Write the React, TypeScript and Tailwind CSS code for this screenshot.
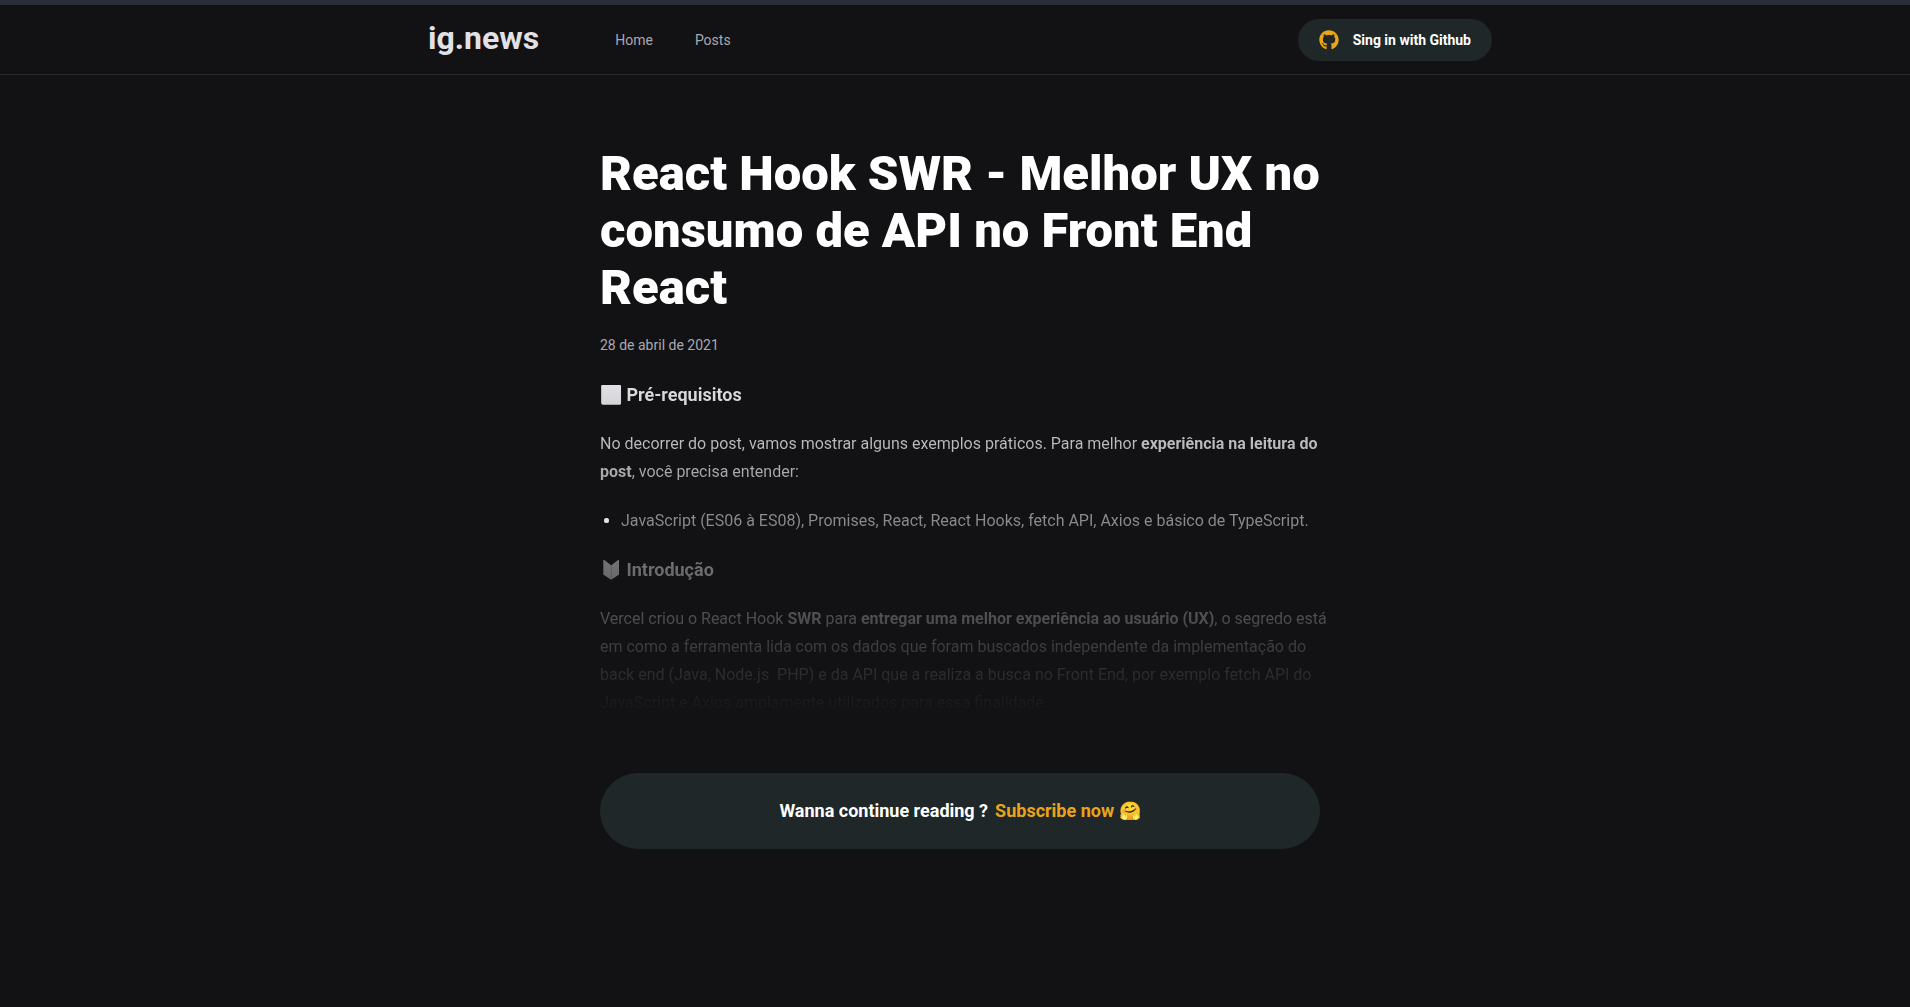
import React from "react";
import { FaGithub } from "react-icons/fa";

function Header() {
  return (
    <header className="border-t-[5px] border-b border-t-[#2b2d3a] border-b-[#29292e] pl-[10px]">
      <div className="mx-auto flex h-[69px] max-w-[1120px] items-center px-7">
        <a href="#" className="pb-1 text-[32px] leading-9 font-bold text-[#e1e1e6]">
          ig.news
        </a>
        <nav className="ml-[76px] flex gap-[42px] text-sm text-[#a8a8b3]">
          <a href="#">Home</a>
          <a href="#">Posts</a>
        </nav>
        <button
          type="button"
          className="ml-auto flex h-[42px] items-center gap-3.5 rounded-full bg-[#1f2729] px-[21px] text-sm font-bold text-white"
        >
          <FaGithub className="size-5 text-[#eba417]" aria-hidden="true" />
          Sing in with Github
        </button>
      </div>
    </header>
  );
}

function PostContent() {
  return (
    <div className="mt-7 -mr-2 bg-linear-to-b from-[#e1e1e6] to-transparent bg-clip-text text-base leading-7">
      <h3 className="text-lg leading-[22px] font-bold text-transparent">⬜ Pré-requisitos</h3>
      <p className="mt-6 text-transparent">
        No decorrer do post, vamos mostrar alguns exemplos práticos. Para melhor{" "}
        <strong>experiência na leitura do post</strong>, você precisa entender:
      </p>
      <ul className="mt-[21px] list-disc pl-[21px] text-transparent marker:text-[#e1e1e6]">
        <li>
          JavaScript (ES06 à ES08), Promises, React, React Hooks, fetch API, Axios e básico de
          TypeScript.
        </li>
      </ul>
      <h3 className="mt-6 text-lg leading-[22px] font-bold text-transparent">🔰 Introdução</h3>
      <p className="mt-6 text-transparent">
        Vercel criou o React Hook <strong>SWR</strong> para{" "}
        <strong>entregar uma melhor experiência ao usuário (UX)</strong>, o segredo está em como a
        ferramenta lida com os dados que foram buscados independente da implementação do back end
        (Java, Node.js&nbsp; PHP) e da API que a realiza a busca no Front End, por exemplo fetch API
        do JavaScript e Axios amplamente utilizados para essa finalidade.
      </p>
    </div>
  );
}

export default function App() {
  return (
    <div className="min-h-screen bg-[#121214] font-['Roboto',sans-serif] text-white">
      <Header />
      <main className="pl-[10px]">
        <article className="mx-auto max-w-[720px] pt-[70px]">
          <h1 className="text-[49px] leading-[57px] font-black">
            React Hook SWR - Melhor UX no consumo de API no Front End React
          </h1>
          <time dateTime="2021-04-28" className="mt-[19px] block text-sm leading-[21px] text-[#a8a8b3]">
            28 de abril de 2021
          </time>
          <PostContent />
          <div className="mt-14 flex h-[76px] items-center justify-center rounded-full bg-[#1f2729] text-lg font-bold">
            Wanna continue reading ?
            <a href="#" className="ml-[7px] text-[#eba417]">
              Subscribe now 🤗
            </a>
          </div>
        </article>
      </main>
    </div>
  );
}
